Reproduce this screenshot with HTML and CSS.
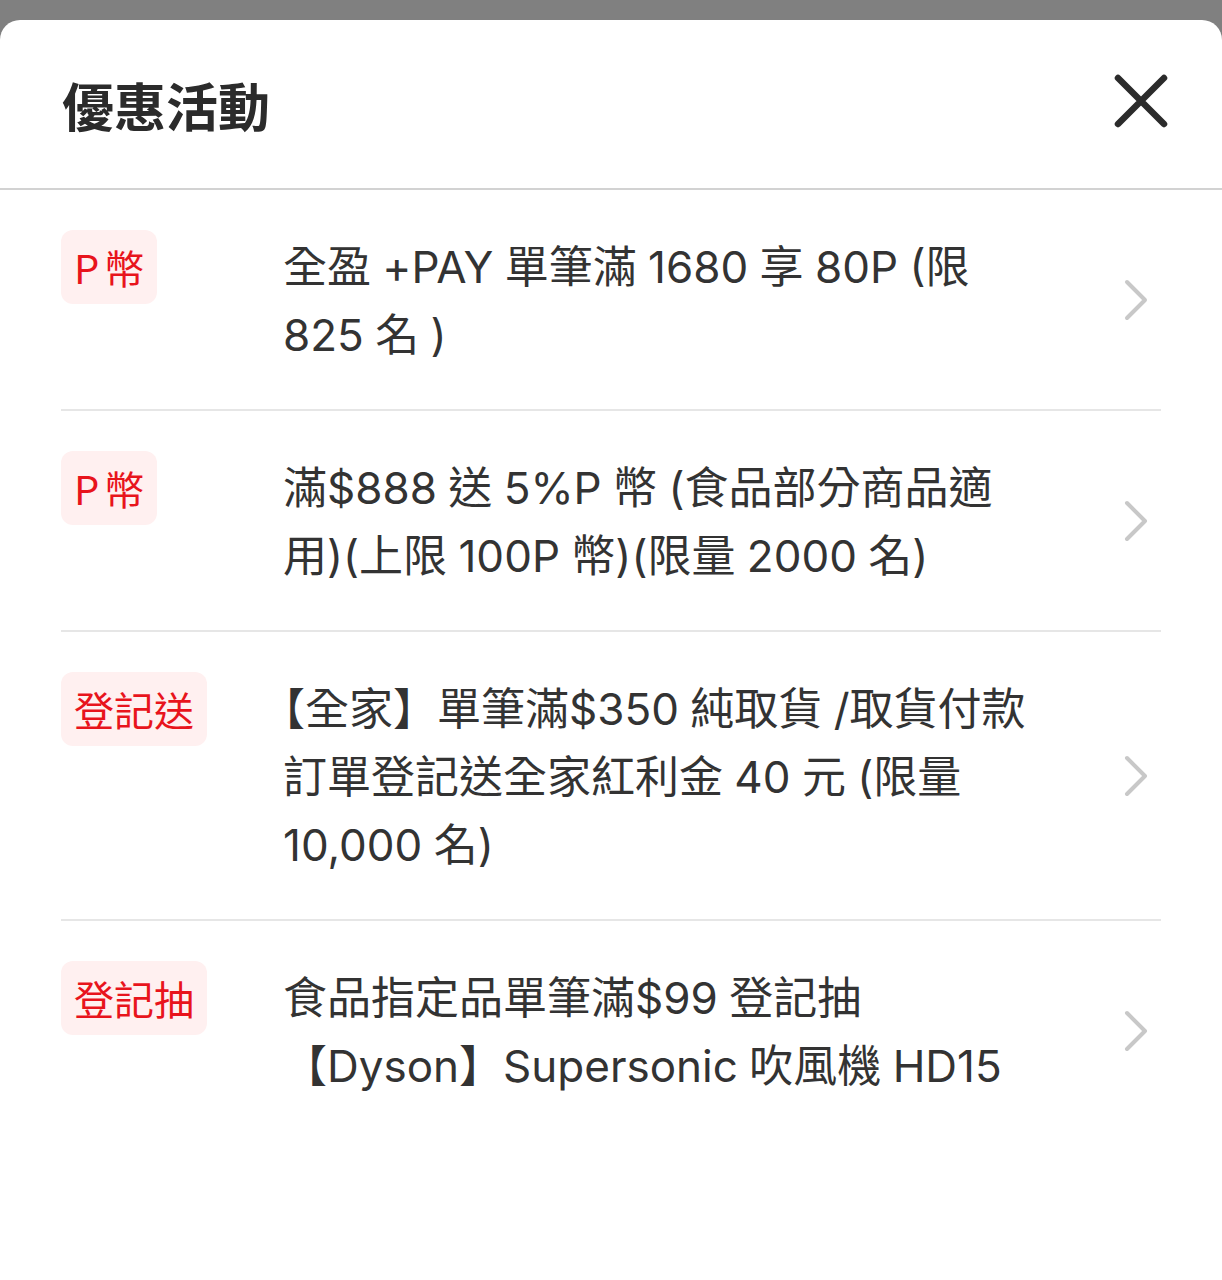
FILE: index.html
```html
<!DOCTYPE html>
<html lang="zh-Hant">
  <head>
    <meta charset="UTF-8" />
    <link rel="stylesheet" href="styles.css">
  </head>
  <body>
    <div class="sheet">
      <div class="sheet-header">
        <h1>優惠活動</h1>
        <button class="close-btn" aria-label="關閉">
          <svg width="54" height="54" viewBox="0 0 54 54">
            <path d="M4 4 L50 50 M50 4 L4 50" stroke="#2b2b2b" stroke-width="6.5" stroke-linecap="round" fill="none" />
          </svg>
        </button>
      </div>

      <ul class="promo-list">
        <li class="promo-item">
          <div class="promo-tag-col"><span class="promo-tag">P 幣</span></div>
          <div class="promo-text">全盈 +PAY 單筆滿 1680 享 80P (限<br>825 名 )</div>
          <svg class="chevron" width="24" height="42" viewBox="0 0 24 42">
            <path d="M3 3 L21 21 L3 39" stroke="#c8c8c8" stroke-width="4" stroke-linecap="round" stroke-linejoin="round" fill="none" />
          </svg>
        </li>
        <li class="promo-item">
          <div class="promo-tag-col"><span class="promo-tag">P 幣</span></div>
          <div class="promo-text">滿$888 送 5%P 幣 (食品部分商品適<br>用)(上限 100P 幣)(限量 2000 名)</div>
          <svg class="chevron" width="24" height="42" viewBox="0 0 24 42">
            <path d="M3 3 L21 21 L3 39" stroke="#c8c8c8" stroke-width="4" stroke-linecap="round" stroke-linejoin="round" fill="none" />
          </svg>
        </li>
        <li class="promo-item">
          <div class="promo-tag-col"><span class="promo-tag">登記送</span></div>
          <div class="promo-text"><span class="trim-start">【</span>全家】單筆滿$350 純取貨 /取貨付款<br>訂單登記送全家紅利金 40 元 (限量<br>10,000 名)</div>
          <svg class="chevron" width="24" height="42" viewBox="0 0 24 42">
            <path d="M3 3 L21 21 L3 39" stroke="#c8c8c8" stroke-width="4" stroke-linecap="round" stroke-linejoin="round" fill="none" />
          </svg>
        </li>
        <li class="promo-item">
          <div class="promo-tag-col"><span class="promo-tag">登記抽</span></div>
          <div class="promo-text">食品指定品單筆滿$99 登記抽<br>【Dyson】Supersonic 吹風機 HD15</div>
          <svg class="chevron" width="24" height="42" viewBox="0 0 24 42">
            <path d="M3 3 L21 21 L3 39" stroke="#c8c8c8" stroke-width="4" stroke-linecap="round" stroke-linejoin="round" fill="none" />
          </svg>
        </li>
      </ul>
    </div>
  </body>
</html>
```

FILE: styles.css
```css
:root {
  --text-color: #333333;
  --tag-red: #e8141c;
  --tag-bg: #fff0f0;
  --divider: #e6e6e6;
}

body {
  margin: 0;
  background-color: #808080;
  font-family: Inter, "Noto Sans CJK TC", sans-serif;
  color: var(--text-color);
}

.sheet {
  margin-top: 20px;
  min-height: calc(100vh - 20px);
  background-color: #ffffff;
  border-radius: 20px 20px 0 0;
}

.sheet-header {
  display: flex;
  align-items: center;
  justify-content: space-between;
  height: 168px;
  padding: 0 54px 0 62px;
  border-bottom: 2px solid #d2d2d2;
}

h1 {
  margin: 0;
  font-family: "Noto Sans CJK TC", sans-serif;
  font-size: 52px;
  font-weight: 600;
  color: #2b2b2b;
}

.close-btn {
  border: none;
  background: none;
  padding: 0;
  margin-top: -7px;
  cursor: pointer;
  display: flex;
}

.promo-list {
  list-style: none;
  margin: 0;
  padding: 0 61px;
}

.promo-item {
  display: flex;
  align-items: flex-start;
  padding: 40px 0 40px;
  border-bottom: 2px solid var(--divider);
}

.promo-item:last-child {
  border-bottom: none;
}

.promo-tag-col {
  width: 222px;
  flex-shrink: 0;
}

.promo-tag {
  display: inline-block;
  height: 74px;
  line-height: 74px;
  padding: 0 13px;
  border-radius: 12px;
  background-color: var(--tag-bg);
  color: var(--tag-red);
  font-family: "Noto Sans CJK TC", sans-serif;
  font-size: 40px;
  word-spacing: -4px;
}

.promo-text {
  flex: 1;
  padding-top: 3px;
  font-size: 44px;
  line-height: 68px;
  white-space: nowrap;
  word-spacing: -1px;
}

/* opening bracket at the start of a paragraph sits flush left */
.trim-start {
  font-feature-settings: "halt";
}

.chevron {
  align-self: center;
  flex-shrink: 0;
  margin-right: 13px;
}
```
